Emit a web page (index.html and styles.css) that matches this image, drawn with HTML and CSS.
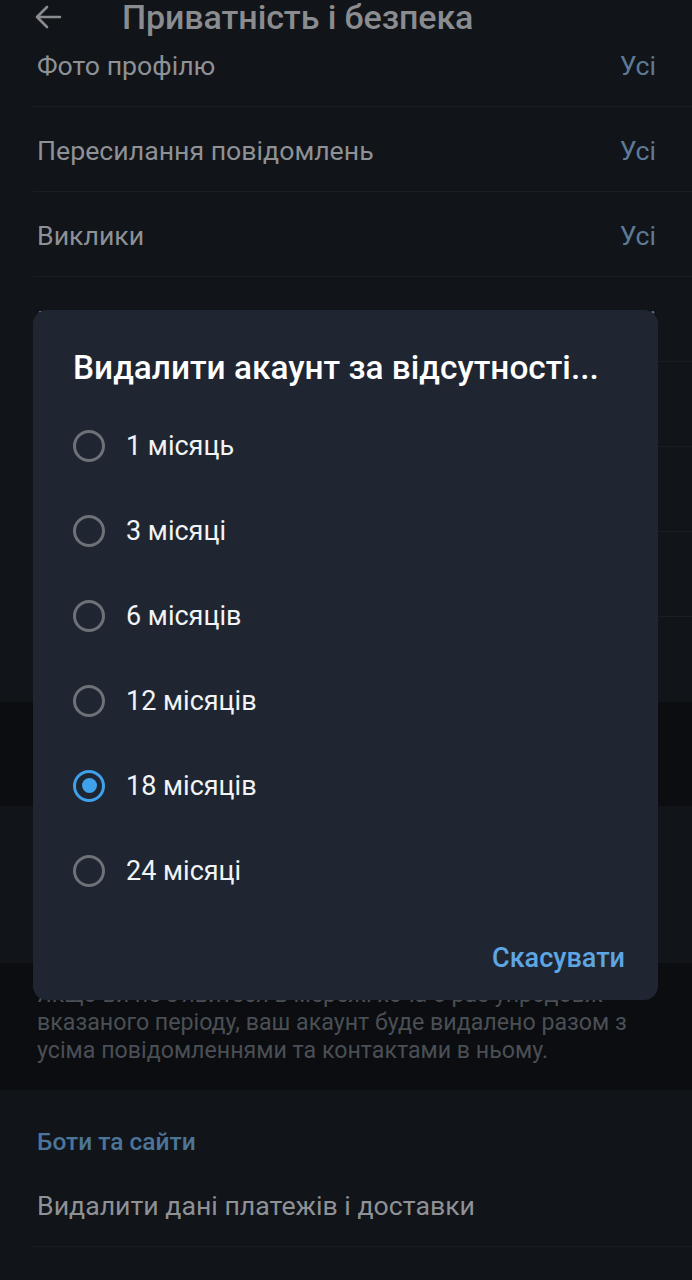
FILE: index.html
```html
<!DOCTYPE html>
<html lang="uk">
<head>
<meta charset="utf-8">
<title>Приватність і безпека</title>
<link rel="stylesheet" href="styles.css">
</head>
<body>
<div class="screen">
  <header class="appbar">
    <svg class="back" viewBox="0 0 28 24" width="28" height="24">
      <path d="M26 12H3M13 2L3 12l10 10" fill="none" stroke="currentColor" stroke-width="2.6" stroke-linecap="round" stroke-linejoin="round"/>
    </svg>
    <h1 class="appbar-title">Приватність і безпека</h1>
  </header>

  <main class="scroll">
    <section class="list first">
      <div class="row"><span class="label">Фото профілю</span><span class="value">Усі</span></div>
      <div class="row"><span class="label">Пересилання повідомлень</span><span class="value">Усі</span></div>
      <div class="row"><span class="label">Виклики</span><span class="value">Усі</span></div>
      <div class="row"><span class="label">Групи та канали</span><span class="value">Усі</span></div>
      <div class="row"><span class="label">Голосові повідомлення</span><span class="value">Усі</span></div>
      <div class="row"><span class="label">Повідомлення</span><span class="value">Усі</span></div>
      <div class="row"><span class="label">Біографія</span><span class="value">Усі</span></div>
      <div class="row last"><span class="label">Дата народження</span><span class="value">Мої контакти</span></div>
    </section>
    <div class="gap gap-a"></div>
    <section class="list">
      <div class="section-head">Видалити мій акаунт</div>
      <div class="row last"><span class="label">За відсутності</span><span class="value">18 місяців</span></div>
    </section>
    <div class="gap gap-b">
      <p class="note">Якщо ви не з'явитеся в мережі хоча б раз упродовж вказаного періоду, ваш акаунт буде видалено разом з усіма повідомленнями та контактами в ньому.</p>
    </div>
    <section class="list">
      <div class="section-head">Боти та сайти</div>
      <div class="row"><span class="label">Видалити дані платежів і доставки</span></div>
    </section>
  </main>

  <div class="dialog" role="dialog">
    <h2 class="dialog-title">Видалити акаунт за відсутності...</h2>
    <ul class="options">
      <li class="option"><span class="radio"></span><span>1 місяць</span></li>
      <li class="option"><span class="radio"></span><span>3 місяці</span></li>
      <li class="option"><span class="radio"></span><span>6 місяців</span></li>
      <li class="option"><span class="radio"></span><span>12 місяців</span></li>
      <li class="option"><span class="radio checked"></span><span>18 місяців</span></li>
      <li class="option"><span class="radio"></span><span>24 місяці</span></li>
    </ul>
    <div class="actions"><button class="btn">Скасувати</button></div>
  </div>
</div>
</body>
</html>
```

FILE: styles.css
```css
* { box-sizing: border-box; }
html, body { margin: 0; padding: 0; }
body {
  background: #111419;
  font-family: Roboto, "Noto Sans", "Liberation Sans", sans-serif;
  color: #8e9195;
}
.screen {
  position: relative;
  width: 692px;
  height: 1280px;
  overflow: hidden;
  background: #111419;
}
.appbar {
  height: 50px;
  display: flex;
  align-items: flex-start;
  padding-left: 34px;
  padding-top: 1px;
  background: #111419;
  color: #8a8c90;
  position: relative;
  z-index: 1;
}
.back { margin-top: 4px; flex: none; }
.appbar-title {
  margin: 0 0 0 60px;
  font-size: 34px;
  font-weight: 500;
  line-height: 32px;
  letter-spacing: -0.1px;
  color: #8a8c90;
}
.scroll { display: flex; flex-direction: column; }
.list { background: #111419; }
.list.first { margin-top: -28px; }
.row {
  height: 85px;
  display: flex;
  align-items: center;
  justify-content: space-between;
  padding: 2px 36px 0 37px;
  position: relative;
  font-size: 26.7px;
}
.row::after {
  content: "";
  position: absolute;
  left: 33px;
  right: 0;
  bottom: 0;
  height: 1px;
  background: #1a1d22;
}
.row.last::after { display: none; }
.label { color: #8e9195; }
.value { color: #5d7b97; }
.gap { background: #0b0d10; }
.gap-a { height: 104px; }
.gap-b { height: 127px; padding: 17px 36px 0 37px; }
.note {
  margin: 0;
  font-size: 23.2px;
  line-height: 28px;
  color: #4a4f55;
}
.section-head {
  height: 72px;
  padding: 38px 37px 0;
  font-size: 24.5px;
  line-height: 28px;
  font-weight: 500;
  color: #4c7598;
}
.dialog {
  position: absolute;
  left: 33px;
  top: 310px;
  width: 625px;
  height: 690px;
  background: #1f2631;
  border-radius: 14px;
  padding: 38px 33px 0 40px;
  display: flex;
  flex-direction: column;
  z-index: 2;
}
.dialog-title {
  margin: 0;
  font-size: 33.4px;
  line-height: 40px;
  font-weight: 500;
  color: #ffffff;
  white-space: nowrap;
}
.options {
  list-style: none;
  margin: 15px 0 0;
  padding: 0;
}
.option {
  height: 85px;
  display: flex;
  align-items: center;
  gap: 21px;
  font-size: 27px;
  color: #f1f3f5;
}
.radio {
  width: 32px;
  height: 32px;
  border-radius: 50%;
  border: 3px solid #6d7278;
  flex: none;
  display: flex;
  align-items: center;
  justify-content: center;
}
.radio.checked { border-color: #3fa0ec; }
.radio.checked::before {
  content: "";
  width: 15px;
  height: 15px;
  border-radius: 50%;
  background: #3fa0ec;
}
.actions {
  margin-top: auto;
  height: 58px;
  display: flex;
  justify-content: flex-end;
  align-items: flex-start;
}
.btn {
  background: none;
  border: 0;
  padding: 0;
  font-family: inherit;
  font-size: 27px;
  font-weight: 500;
  line-height: 32px;
  color: #5da6e3;
}
```
